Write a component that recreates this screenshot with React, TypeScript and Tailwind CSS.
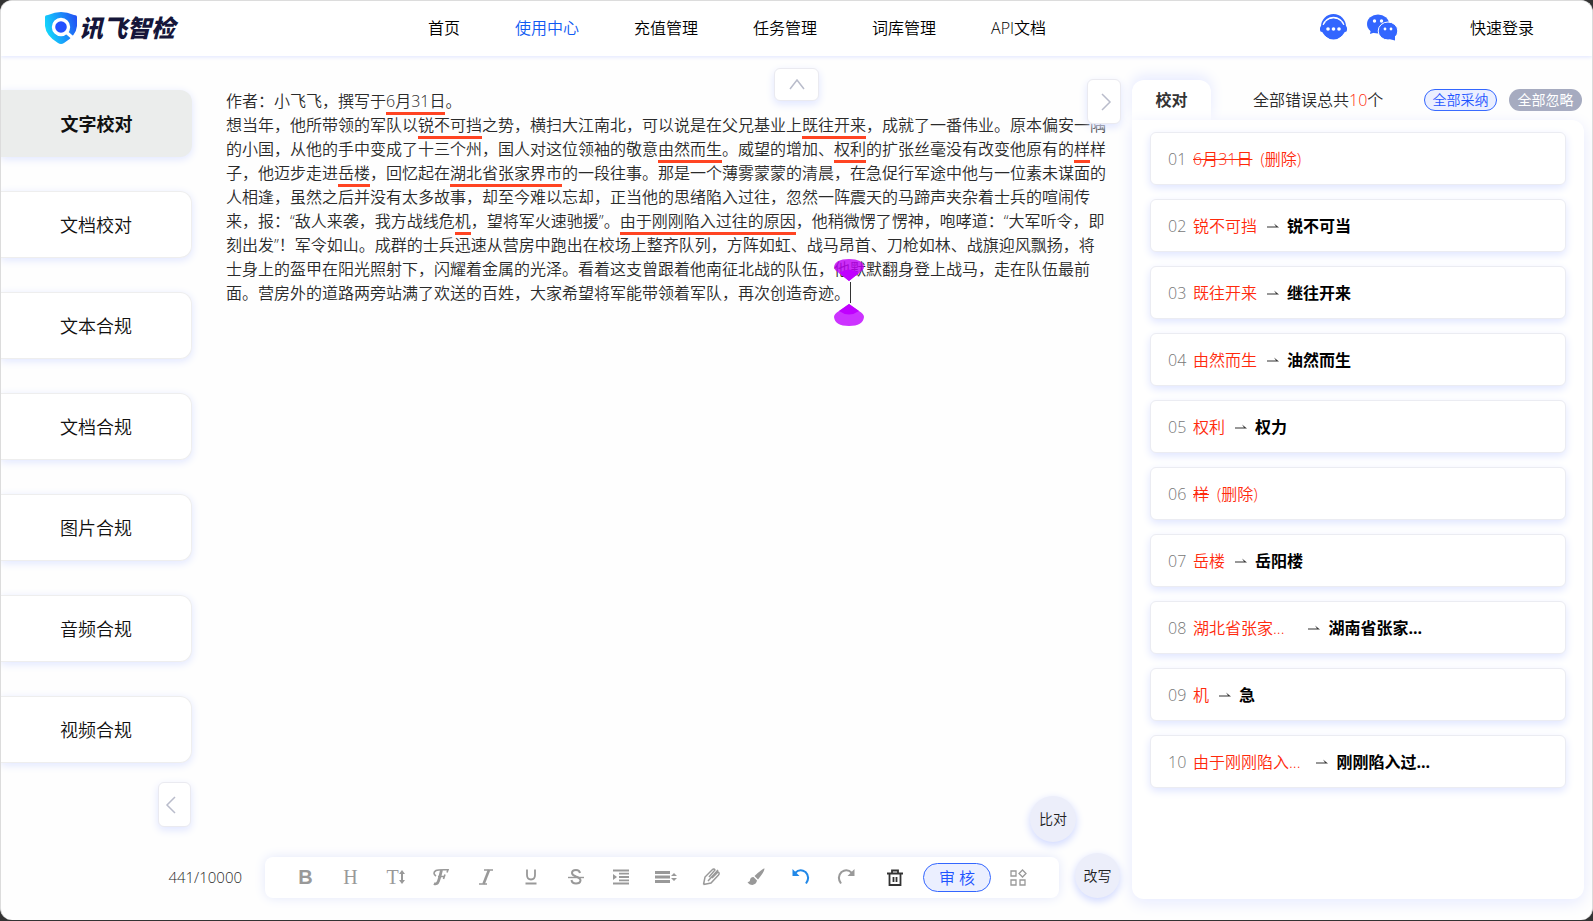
import { Fragment } from "react";
import type { ReactNode } from "react";

const navItems = ["首页", "使用中心", "充值管理", "任务管理", "词库管理", "API文档"];

const sideItems = ["文字校对", "文档校对", "文本合规", "文档合规", "图片合规", "音频合规", "视频合规"];

// text between brackets is a flagged error
const lines = [
  "作者：小飞飞，撰写于[6月31日]。",
  "想当年，他所带领的军队以[锐不可挡]之势，横扫大江南北，可以说是在父兄基业上[既往开来]，成就了一番伟业。原本偏安一隅",
  "的小国，从他的手中变成了十三个州，国人对这位领袖的敬意[由然而生]。威望的增加、[权利]的扩张丝毫没有改变他原有的[样]样",
  "子，他迈步走进[岳楼]，回忆起在[湖北省张家界市]的一段往事。那是一个薄雾蒙蒙的清晨，在急促行军途中他与一位素未谋面的",
  "人相逢，虽然之后并没有太多故事，却至今难以忘却，正当他的思绪陷入过往，忽然一阵震天的马蹄声夹杂着士兵的喧闹传",
  "来，报：“敌人来袭，我方战线危[机]，望将军火速驰援”。[由于刚刚陷入过往的原因]，他稍微愣了愣神，咆哮道：“大军听令，即",
  "刻出发”！军令如山。成群的士兵迅速从营房中跑出在校场上整齐队列，方阵如虹、战马昂首、刀枪如林、战旗迎风飘扬，将",
  "士身上的盔甲在阳光照射下，闪耀着金属的光泽。看着这支曾跟着他南征北战的队伍，他默默翻身登上战马，走在队伍最前",
  "面。营房外的道路两旁站满了欢送的百姓，大家希望将军能带领着军队，再次创造奇迹。",
];

type Issue = { wrong: string; right?: string; strike?: boolean; gap?: string };

const issues: Issue[] = [
  { wrong: "6月31日", strike: true },
  { wrong: "锐不可挡", right: "锐不可当" },
  { wrong: "既往开来", right: "继往开来" },
  { wrong: "由然而生", right: "油然而生" },
  { wrong: "权利", right: "权力" },
  { wrong: "样", strike: true },
  { wrong: "岳楼", right: "岳阳楼" },
  { wrong: "湖北省张家...", right: "湖南省张家...", gap: "ml-6" },
  { wrong: "机", right: "急" },
  { wrong: "由于刚刚陷入...", right: "刚刚陷入过...", gap: "ml-4" },
];

function Chevron({ d }: { d: string }) {
  return (
    <svg width="18" height="18" viewBox="0 0 18 18" fill="none" stroke="#b9bccb" strokeWidth="1.5">
      <path d={d} />
    </svg>
  );
}

function Logo() {
  return (
    <a href="#" className="flex items-center gap-0.5" aria-label="讯飞智检">
      <svg width="32" height="32" viewBox="0 0 32 32">
        <defs>
          <linearGradient id="shield" x1="0" y1="0.6" x2="1" y2="0.3">
            <stop offset="0" stopColor="#14dcfb" />
            <stop offset="0.45" stopColor="#18a0fb" />
            <stop offset="1" stopColor="#2354f4" />
          </linearGradient>
        </defs>
        <path d="M0 5Q0 3 3 3Q10 0 16 0Q22 0 29 3Q32 3 32 5V14Q31 24 19 31Q16 33 13 31Q1 24 0 14Z" fill="url(#shield)" />
        <circle cx="16" cy="15" r="7.5" fill="#2350ff" stroke="#fff" strokeWidth="3.4" />
        <path d="M21 20L28 26" stroke="#fff" strokeWidth="3.4" />
      </svg>
      <span className="text-2xl leading-8 font-black italic text-[#15163a]">讯飞智检</span>
    </a>
  );
}

function Icon({ children, color = "#999" }: { children: ReactNode; color?: string }) {
  return (
    <svg width="18" height="18" viewBox="0 0 18 18" fill="none" stroke={color} strokeWidth="1.6">
      {children}
    </svg>
  );
}

const tools: { label: string; icon: ReactNode }[] = [
  { label: "加粗", icon: <span className="font-['Liberation_Sans',sans-serif] font-bold text-xl leading-5">B</span> },
  { label: "标题", icon: <span className="font-['Liberation_Serif',serif] text-xl leading-5">H</span> },
  {
    label: "字号",
    icon: (
      <span className="flex items-center font-['Liberation_Serif',serif] text-xl leading-5">
        T
        <svg width="6" height="16" viewBox="0 0 6 16" fill="#999">
          <path d="M3 1L6 5H4V11H6L3 15L0 11H2V5H0Z" />
        </svg>
      </span>
    ),
  },
  {
    label: "字体",
    icon: (
      <Icon>
        <path d="M4 8Q0 5 4 2.500Q6 1.500 16 1.800L15 4.500M6 8.500H13M13 6.500L11.500 11" strokeWidth="1.6" />
        <path d="M9.500 2Q8 9 6.500 13Q5 17 2 15.500" strokeWidth="2.8" />
      </Icon>
    ),
  },
  {
    label: "斜体",
    icon: (
      <Icon>
        <path d="M7 2H16M2 16H10" />
        <path d="M12 2L6.500 16" strokeWidth="2.6" />
      </Icon>
    ),
  },
  {
    label: "下划线",
    icon: (
      <Icon>
        <path d="M5 1.500V7Q5 11.500 9 11.500Q13 11.500 13 7V1.500M3.500 15.500H14.500" strokeWidth="1.8" />
      </Icon>
    ),
  },
  {
    label: "删除线",
    icon: (
      <Icon>
        <path d="M13 5Q12.500 2 9 2Q5 2 5 5Q5 7 9 8.500Q13.500 10 13.500 12.500Q13 15.500 9 15.500Q5 15.500 4.500 12" strokeWidth="2" />
        <path d="M1 9.500H17" strokeWidth="1.4" />
      </Icon>
    ),
  },
  {
    label: "缩进",
    icon: (
      <Icon>
        <path d="M1 2.500H17M7 5.700H17M7 9H17M7 12.300H17M1 15.500H17" strokeWidth="1.8" />
        <path d="M1 6L5 9L1 12Z" fill="#999" stroke="none" />
      </Icon>
    ),
  },
  {
    label: "行高",
    icon: (
      <svg width="22" height="18" viewBox="0 0 22 18" fill="#999">
        <path d="M0 3H15V6H0ZM0 7.500H15V10.500H0ZM0 12H15V15H0ZM19 5L22 8H16ZM16 10H22L19 13Z" />
      </svg>
    ),
  },
  {
    label: "文字颜色",
    icon: (
      <Icon>
        <path d="M1.500 16.500L3 9L10 2Q12 0 13 2L7 9M1.500 16.500L9 15L16.500 7Q18 5 16 4L10 10M6 13L16 2" strokeWidth="1.5" />
      </Icon>
    ),
  },
  {
    label: "背景颜色",
    icon: (
      <Icon>
        <path d="M17.500 0.500Q16 0 7.500 8L11 11.500Q18 3 17.500 0.500ZM6.500 9Q3 9 3 12.500Q2.500 14 0.500 14Q2 17 5.500 17Q9.500 16 10 12.500Z" fill="#999" stroke="none" />
      </Icon>
    ),
  },
  {
    label: "撤销",
    icon: (
      <Icon color="#2188e8">
        <path d="M3 5Q8 0 13.500 4Q18.500 9 14 15.500" strokeWidth="2" />
        <path d="M0.500 1V8H7.500Z" fill="#2188e8" stroke="none" />
      </Icon>
    ),
  },
  {
    label: "重做",
    icon: (
      <Icon>
        <path d="M15 5Q10 0 4.500 4Q-0.500 9 4 15.500" strokeWidth="2" />
        <path d="M17.500 1V8H10.500Z" fill="#999" stroke="none" />
      </Icon>
    ),
  },
];

function EditorLine({ text }: { text: string }) {
  return (
    <>
      {text.split(/[[\]]/).map((part, i) =>
        i % 2 ? (
          <span key={i} className="border-b-3 border-[#ff4422]">{part}</span>
        ) : (
          <Fragment key={i}>{part}</Fragment>
        )
      )}
    </>
  );
}

function Caret() {
  return (
    <span className="relative">
      <svg className="absolute -left-4 -top-6" width="30" height="68" viewBox="0 0 30 68">
        <path d="M15 23L5 15Q0 12 0 9Q1 1 15 1Q29 1 30 9Q30 12 25 15Z" fill="#c000f5" fillOpacity="0.82" />
        <path d="M15 23L5 15Q15 8 25 15Z" fill="#c000ff" />
        <path d="M16.500 24V45" stroke="#333" />
        <path d="M15 46L25 53Q30 56 30 59Q29 68 15 68Q1 68 0 59Q0 56 5 53Z" fill="#cc33ff" />
        <path d="M15 46L25 53Q15 60 5 53Z" fill="#c000ff" />
      </svg>
    </span>
  );
}

export default function App() {
  return (
    <div className="min-h-screen flex bg-[#333] font-['Open_Sans','Noto_Sans_CJK_SC',sans-serif] font-[350] text-base text-[#2a2a2a]">
      <div className="flex-1 min-w-0 flex flex-col mb-px rounded-xl border border-b-0 border-[#dcdcdc] bg-[#fefefe] overflow-hidden">
        <header className="h-[55px] shrink-0 flex items-center pb-0.5 pl-11 pr-[58px] bg-white text-black shadow-[0_1px_4px_#dfe5ff]">
          <Logo />
          <nav className="flex-1 flex gap-[55px] pl-[253px]">
            {navItems.map((item) => (
              <a key={item} href="#" className={item === "使用中心" ? "text-[#0f5af2]" : ""}>{item}</a>
            ))}
          </nav>
          <div className="flex items-center gap-5">
            <button aria-label="客服">
              <svg width="27" height="27" viewBox="0 0 27 27">
                <circle cx="13.500" cy="12.500" r="12.500" fill="#3366ff" />
                <path d="M3.500 11A10.500 10.500 0 0 1 23.500 11" fill="none" stroke="#fff" strokeWidth="2" />
                <circle cx="13.500" cy="15" r="10.500" fill="#3366ff" />
                <rect x="0" y="12" width="27" height="6" rx="2" fill="#3366ff" />
                <g fill="#fff">
                  <circle cx="8" cy="15" r="1.800" />
                  <circle cx="13.500" cy="15" r="1.800" />
                  <circle cx="19" cy="15" r="1.800" />
                </g>
              </svg>
            </button>
            <button aria-label="微信">
              <svg width="31" height="27" viewBox="0 0 31 27">
                <path d="M4 15L3 20L9 18Z" fill="#3366ff" />
                <ellipse cx="11" cy="10" rx="11" ry="9.500" fill="#3366ff" />
                <ellipse cx="21" cy="17" rx="9.800" ry="9" fill="#3366ff" stroke="#fff" />
                <path d="M28 21L28 26.500L22 25Z" fill="#3366ff" />
                <g fill="#fff">
                  <circle cx="7.500" cy="7" r="1.700" />
                  <circle cx="14.500" cy="7" r="1.700" />
                  <circle cx="18" cy="15" r="1.400" />
                  <circle cx="24" cy="15" r="1.400" />
                </g>
              </svg>
            </button>
          </div>
          <a href="#" className="ml-[72px]">快速登录</a>
        </header>

        <div className="flex-1 flex">
          <aside className="w-[191px] shrink-0 pt-[34px] flex flex-col items-end">
            <nav className="w-full flex flex-col gap-[34px]">
              {sideItems.map((item, i) => (
                <a
                  key={item}
                  href="#"
                  className={`h-[67px] flex items-center justify-center rounded-r-xl text-lg text-[#111] shadow-[0_2px_8px_#dfe5ff] ${
                    i === 0 ? "bg-[#ebedec] font-bold" : "bg-white border border-l-0 border-[#eee]"
                  }`}
                >
                  {item}
                </a>
              ))}
            </nav>
            <button aria-label="收起侧栏" className="mt-[19px] mr-px w-[33px] h-[45px] pl-1 flex items-center rounded-md border border-[#eaeaf0] bg-white shadow-[0_3px_8px_#dfe5ff]">
              <Chevron d="M12 1L4 9L12 17" />
            </button>
          </aside>

          <main className="relative flex-1 min-w-0 flex flex-col pt-[33px] pb-[22px]">
            <button aria-label="收起顶部" className="absolute left-[582px] top-3 w-[45px] h-[33px] grid place-items-center rounded-md border border-[#eaeaf0] bg-white shadow-[0_3px_8px_#dfe5ff]">
              <Chevron d="M2 13L9 4L16 13" />
            </button>
            <div className="flex-1 pl-[34px] leading-6 whitespace-nowrap">
              {lines.map((line, i) => (
                <p key={i}>
                  <EditorLine text={line} />
                  {i === lines.length - 1 && <Caret />}
                </p>
              ))}
            </div>
            <button aria-label="收起结果" className="absolute right-[11px] top-[23px] w-[34px] h-[45px] pr-1 flex items-center justify-end rounded-md border border-[#eaeaf0] bg-white shadow-[0_3px_8px_#dfe5ff]">
              <Chevron d="M4 1L12 9L4 17" />
            </button>

            <button className="self-end mr-14 mb-[11px] size-[46px] rounded-full bg-[#eceefa] text-sm text-[#222] shadow-[0_3px_8px_#cdd6ff]">比对</button>
            <div className="flex items-end justify-end pr-3">
              <span className="mr-[23px] shrink-0 text-[15px] leading-[41px]">441/10000</span>
              <div className="flex items-center h-[41px] w-[794px] shrink-0 pl-[18px] rounded-lg bg-white shadow-[0_0_12px_#e3e8fb] text-[#999]">
                {tools.map((tool) => (
                  <button key={tool.label} aria-label={tool.label} className="w-[45px] pb-0.5 flex justify-center">{tool.icon}</button>
                ))}
                <button aria-label="清空" className="w-[50px] pl-1 flex justify-center">
                  <Icon color="#333">
                    <path d="M1 4.500H17M6 4V1.500H12V4M3.500 5V16H14.500V5M7.500 8V13M10.500 8V13" strokeWidth="1.8" />
                  </Icon>
                </button>
                <button className="ml-[5px] w-[68px] h-[29px] rounded-full border border-[#3366ff] bg-[#ebefff] text-base leading-6 text-[#1f55ff]">审 核</button>
                <button aria-label="更多" className="w-[54px] flex justify-center">
                  <Icon>
                    <path d="M2 2H7V7H2ZM2 11H7V16H2ZM11 11H16V16H11ZM13.500 1L17 4.500L13.500 8L10 4.500Z" strokeWidth="1.3" />
                  </Icon>
                </button>
              </div>
              <button className="ml-4 size-[45px] shrink-0 rounded-full bg-[#eceefa] text-sm text-[#222] shadow-[0_3px_8px_#cdd6ff]">改写</button>
            </div>
          </main>

          <section className="w-[452px] shrink-0 mr-2 pt-6 pb-[21px] flex flex-col">
            <div className="flex items-center h-10">
              <h2 className="w-[79px] h-10 leading-10 text-center font-bold text-[#333] rounded-t-xl bg-white shadow-[0_-4px_14px_#e6eaff]">校对</h2>
              <p className="ml-[42px]">
                全部错误总共<span className="text-[#ff2a0c]">10</span>个
              </p>
              <button className="ml-auto w-[73px] h-[22px] rounded-full border border-[#3366ff] bg-[#ebefff] text-sm leading-5 text-[#1f55ff]">全部采纳</button>
              <button className="ml-3 mr-0.5 w-[73px] h-[22px] rounded-full bg-[#a6abc0] text-sm leading-5 font-normal text-white">全部忽略</button>
            </div>
            <ol className="relative flex-1 flex flex-col gap-3.5 px-[18px] pt-3 pb-4 bg-white rounded-b-xl rounded-tr-xl shadow-[0_4px_16px_#e6eaff]">
              {issues.map((issue, i) => (
                <li key={i} className="h-[53px] flex items-center pl-[17px] rounded-md border border-[#ebecf2] bg-white shadow-[0_3px_8px_#dfe5ff]">
                  <span className="w-[25px] text-[#777]">{String(i + 1).padStart(2, "0")}</span>
                  <span className={`text-[#ff2a0c] ${issue.strike ? "line-through" : ""}`}>{issue.wrong}</span>
                  {issue.right ? (
                    <>
                      <svg className={issue.gap ?? "ml-2.5"} width="12" height="8" viewBox="0 0 12 8" fill="#333">
                        <path d="M0 4.500H9L7 1.500L12 5.500H0Z" />
                      </svg>
                      <span className="ml-2 font-bold text-black">{issue.right}</span>
                    </>
                  ) : (
                    <span className="ml-2 text-[#ff2a0c]">(删除)</span>
                  )}
                </li>
              ))}
            </ol>
          </section>
        </div>
      </div>
    </div>
  );
}
